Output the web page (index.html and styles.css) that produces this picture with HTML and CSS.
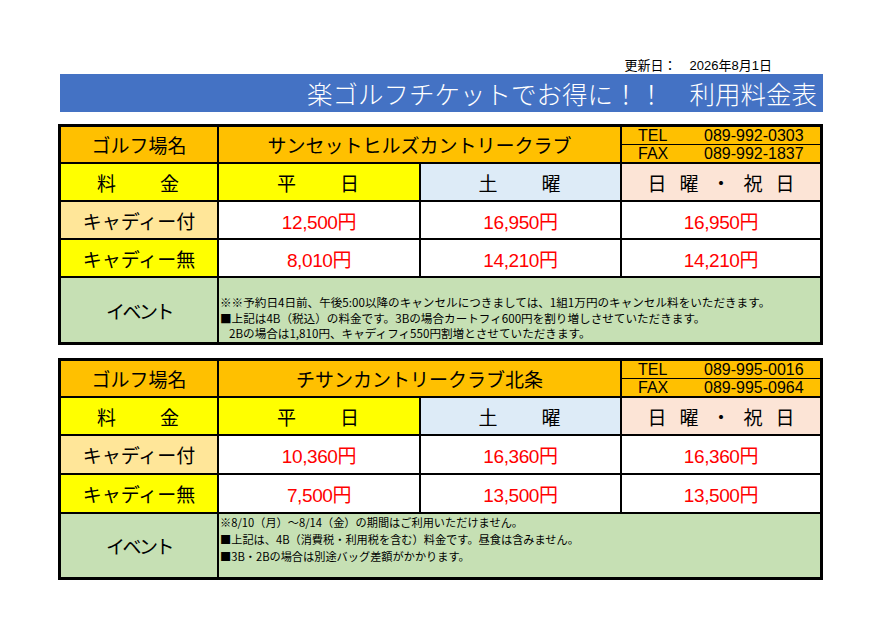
FILE: index.html
```html
<!DOCTYPE html>
<html lang="ja">
<head>
<meta charset="utf-8">
<title>利用料金表</title>
<link rel="stylesheet" href="styles.css">
</head>
<body>
<div class="page">
  <div class="updated">更新日：　2026年8月1日</div>
  <div class="title">楽ゴルフチケットでお得に！！　利用料金表</div>

  <div class="rate-table">
    <div class="cell orange label">ゴルフ場名</div>
    <div class="cell orange course">サンセットヒルズカントリークラブ</div>
    <div class="contact">
      <div class="contact-row"><span>TEL</span><span>089-992-0303</span></div>
      <div class="contact-row"><span>FAX</span><span>089-992-1837</span></div>
    </div>
    <div class="cell yellow label wide">料　　金</div>
    <div class="cell yellow label wide">平　　日</div>
    <div class="cell blue label wide">土　　曜</div>
    <div class="cell peach label holiday">日曜・祝日</div>
    <div class="cell light-orange label">キャディー付</div>
    <div class="cell price">12,500円</div>
    <div class="cell price">16,950円</div>
    <div class="cell price">16,950円</div>
    <div class="cell yellow label">キャディー無</div>
    <div class="cell price">8,010円</div>
    <div class="cell price">14,210円</div>
    <div class="cell price">14,210円</div>
    <div class="cell green label event">イベント</div>
    <div class="notes notes-bottom">
      <p>※※予約日4日前、午後5:00以降のキャンセルにつきましては、1組1万円のキャンセル料をいただきます。</p>
      <p>■上記は4B（税込）の料金です。3Bの場合カートフィ600円を割り増しさせていただきます。</p>
      <p class="indent">2Bの場合は1,810円、キャディフィ550円割増とさせていただきます。</p>
    </div>
  </div>

  <div class="rate-table second">
    <div class="cell orange label">ゴルフ場名</div>
    <div class="cell orange course">チサンカントリークラブ北条</div>
    <div class="contact">
      <div class="contact-row"><span>TEL</span><span>089-995-0016</span></div>
      <div class="contact-row"><span>FAX</span><span>089-995-0964</span></div>
    </div>
    <div class="cell yellow label wide">料　　金</div>
    <div class="cell yellow label wide">平　　日</div>
    <div class="cell blue label wide">土　　曜</div>
    <div class="cell peach label holiday">日曜・祝日</div>
    <div class="cell light-orange label">キャディー付</div>
    <div class="cell price">10,360円</div>
    <div class="cell price">16,360円</div>
    <div class="cell price">16,360円</div>
    <div class="cell yellow label">キャディー無</div>
    <div class="cell price">7,500円</div>
    <div class="cell price">13,500円</div>
    <div class="cell price">13,500円</div>
    <div class="cell green label event">イベント</div>
    <div class="notes notes-top">
      <p>※8/10（月）～8/14（金）の期間はご利用いただけません。</p>
      <p>■上記は、4B（消費税・利用税を含む）料金です。昼食は含みません。</p>
      <p>■3B・2Bの場合は別途バッグ差額がかかります。</p>
    </div>
  </div>
</div>
</body>
</html>
```
FILE: styles.css
```css
* { box-sizing: border-box; }

body {
  margin: 0;
  background: #fff;
  font-family: "Noto Sans CJK JP", sans-serif;
  color: #000;
}

.page {
  padding: 58px 0 0 58px;
  width: 823px;
}

.updated {
  height: 16px;
  line-height: 16px;
  font-size: 13px;
  text-align: right;
  padding-right: 51px;
  font-family: "Liberation Sans", "Noto Sans CJK JP", sans-serif;
}

.title {
  margin-left: 2px;
  height: 38px;
  line-height: 38px;
  background: #4472c4;
  color: #fff;
  font-size: 25.5px;
  font-weight: 300;
  text-align: right;
  padding-right: 6px;
  white-space: nowrap;
}

.rate-table {
  margin-top: 12px;
  width: 765px;
  display: grid;
  grid-template-columns: 156px 200px 199px 198px;
  grid-template-rows: 35px 36px 36px 36px 64px;
  gap: 2px;
  background: #000;
  border: 3px solid #000;
}

.rate-table.second {
  margin-top: 13px;
  grid-template-rows: 35px 36px 37px 37px 63px;
}

.cell {
  display: flex;
  align-items: center;
  justify-content: center;
  white-space: nowrap;
}

.label {
  font-size: 19px;
}

.wide {
  letter-spacing: 2px;
}

.holiday {
  letter-spacing: 13px;
  padding-left: 13px;
}

.event {
  letter-spacing: -2.5px;
}

.course {
  grid-column: span 2;
  font-size: 19px;
}

.orange { background: #ffc000; }
.yellow { background: #ffff00; }
.blue { background: #ddebf7; }
.peach { background: #fce4d6; }
.light-orange { background: #ffe699; }
.green { background: #c6e0b4; }

.price {
  background: #fff;
  color: #ff0000;
  font-family: "Liberation Sans", "Noto Sans CJK JP", sans-serif;
  font-size: 19px;
  letter-spacing: -0.4px;
}

.contact {
  display: grid;
  grid-template-rows: 17px 17px;
  gap: 1px;
  background: #000;
}

.contact-row {
  background: #ffc000;
  display: grid;
  grid-template-columns: 66px auto;
  padding-left: 16px;
  font-family: "Liberation Sans", sans-serif;
  font-size: 16px;
  line-height: 17px;
}

.notes {
  grid-column: span 3;
  background: #c6e0b4;
  display: flex;
  flex-direction: column;
  padding-left: 1px;
  font-size: 11.6px;
  white-space: nowrap;
}

.notes p {
  margin: 0;
}

.notes-bottom {
  justify-content: flex-end;
  line-height: 15.7px;
}

.notes-top {
  justify-content: flex-start;
  font-size: 11.2px;
  line-height: 17px;
}

.indent {
  padding-left: 9px;
}
```
